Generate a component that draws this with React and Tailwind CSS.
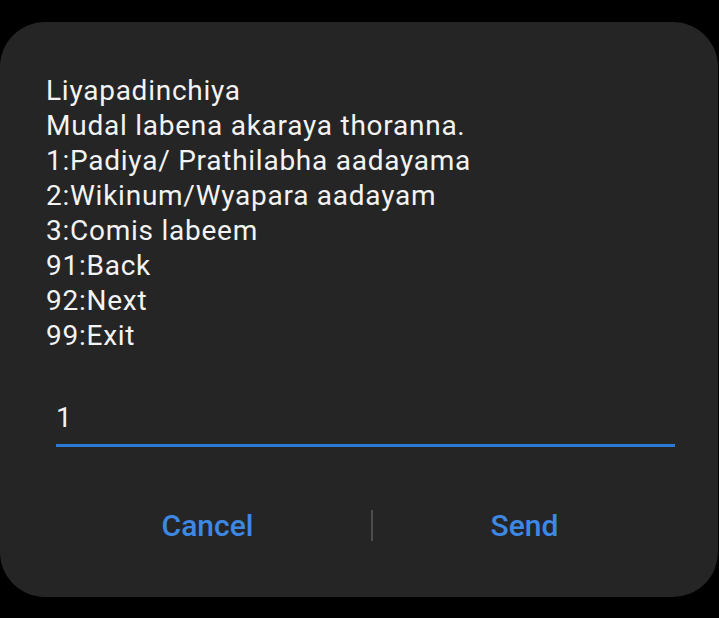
export default function App() {
  const lines = [
    "Liyapadinchiya",
    "Mudal labena akaraya thoranna.",
    "1:Padiya/ Prathilabha aadayama",
    "2:Wikinum/Wyapara aadayam",
    "3:Comis labeem",
    "91:Back",
    "92:Next",
    "99:Exit",
  ];
  return (
    <div
      className="w-[719px] h-[618px] bg-black pt-[22px] overflow-hidden"
      style={{ fontFamily: "Roboto, 'Noto Sans', sans-serif" }}
    >
      <div className="w-[718px] h-[575px] bg-[#252525] rounded-[45px] pt-[51px] pl-[46px] flex flex-col">
        <div className="text-[28px] leading-[35px] tracking-[0.75px] text-[#f3f3f3]">
          {lines.map((l) => (
            <div key={l}>{l}</div>
          ))}
        </div>
        <div className="mt-[47px] ml-[10px] w-[619px] flex flex-col">
          <div className="text-[28px] leading-[35px] text-[#f3f3f3] pb-[9px]">1</div>
          <div className="h-[3px] bg-[#2a7ad6]"></div>
        </div>
        <div className="mt-[63px] -ml-[2px] flex items-center">
          <div className="w-[327px] text-center text-[30px] leading-[30px] font-medium text-[#3d88e3]">
            Cancel
          </div>
          <div className="w-[2px] h-[31px] bg-[#4e4e4e]"></div>
          <div className="w-[303px] text-center text-[30px] leading-[30px] font-medium text-[#3d88e3]">
            Send
          </div>
        </div>
      </div>
    </div>
  );
}
